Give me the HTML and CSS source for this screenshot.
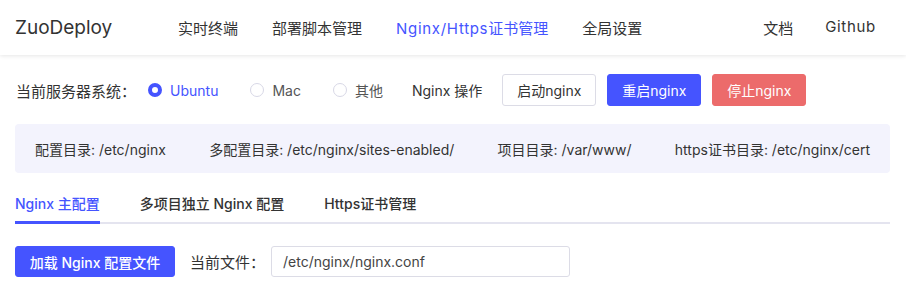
FILE: index.html
```html
<!DOCTYPE html>
<html lang="zh-CN">
<head>
    <meta charset="UTF-8">
    <meta name="viewport" content="width=device-width, initial-scale=1.0">
    <title>ZuoDeploy</title>
    <link rel="stylesheet" href="styles.css">
</head>
<body>
    <header class="header">
        <div class="logo">ZuoDeploy</div>
        <nav class="nav">
            <a href="#">实时终端</a>
            <a href="#">部署脚本管理</a>
            <a href="#" class="active"><span class="latin">Nginx/Https</span>证书管理</a>
            <a href="#">全局设置</a>
        </nav>
        <nav class="nav-right">
            <a href="#">文档</a>
            <a href="#" class="latin">Github</a>
        </nav>
    </header>

    <main class="main">
        <div class="system-row">
            <span class="label">当前服务器系统：</span>
            <label class="radio checked"><span class="dot"></span>Ubuntu</label>
            <label class="radio"><span class="dot"></span>Mac</label>
            <label class="radio"><span class="dot"></span>其他</label>
            <span class="ops-label">Nginx 操作</span>
            <button class="btn">启动nginx</button>
            <button class="btn btn-primary">重启nginx</button>
            <button class="btn btn-danger">停止nginx</button>
        </div>

        <div class="info-box">
            <span>配置目录: /etc/nginx</span>
            <span>多配置目录: /etc/nginx/sites-enabled/</span>
            <span>项目目录: /var/www/</span>
            <span>https证书目录: /etc/nginx/cert</span>
        </div>

        <div class="tabs">
            <div class="tab active">Nginx 主配置</div>
            <div class="tab">多项目独立 Nginx 配置</div>
            <div class="tab">Https证书管理</div>
        </div>

        <div class="file-row">
            <button class="btn btn-primary btn-load">加载 Nginx 配置文件</button>
            <span class="file-label">当前文件：</span>
            <input class="file-input" type="text" value="/etc/nginx/nginx.conf">
        </div>
    </main>
</body>
</html>
```

FILE: styles.css
```css
body {
    font-family: Inter, "Noto Sans CJK SC", sans-serif;
    color: #333;
    margin: 0;
    background: #fff;
}
a {
    text-decoration: none;
    color: #333;
}
.header {
    display: flex;
    align-items: center;
    height: 55px;
    padding: 0 30px 0 15px;
    box-shadow: 0 1px 4px rgba(0, 0, 0, 0.1);
}
.logo {
    font-size: 19px;
    color: #333;
    width: 163px;
}
.nav {
    display: flex;
    gap: 34px;
    flex: 1;
}
.nav a, .nav-right a {
    font-size: 15px;
}
.nav a.active {
    color: #4554ff;
}
.latin {
    letter-spacing: 0.7px;
}
.nav-right {
    display: flex;
    gap: 32px;
}
.main {
    padding: 19px 16px 0 15px;
}
.system-row {
    display: flex;
    align-items: center;
    height: 32px;
    font-size: 14px;
}
.label {
    margin-left: 1px;
    font-size: 15px;
    margin-right: 12px;
}
.radio {
    display: flex;
    align-items: center;
    gap: 8px;
    color: #555;
    margin-right: 32px;
}
.radio .dot {
    width: 14px;
    height: 14px;
    border: 1px solid #d8d8e6;
    border-radius: 50%;
    box-sizing: border-box;
}
.radio.checked {
    color: #4554ff;
}
.radio.checked .dot {
    border: 4px solid #4554ff;
    background: #fff;
}
.ops-label {
    margin-left: -3px;
    margin-right: 20px;
}
.btn {
    font-family: inherit;
    font-size: 14px;
    width: 94px;
    height: 32px;
    padding: 0;
    border: 1px solid #dcdce6;
    border-radius: 3px;
    background: #fff;
    color: #333;
    margin-right: 11px;
    white-space: nowrap;
}
.btn-primary {
    background: #4554ff;
    border-color: #4554ff;
    color: #fff;
}
.btn-danger {
    background: #ec6b6b;
    border-color: #ec6b6b;
    color: #fff;
}
.info-box {
    display: flex;
    justify-content: space-between;
    align-items: center;
    height: 49px;
    margin-top: 18px;
    padding: 0 20px;
    background: #f3f3fd;
    border-radius: 4px;
    font-size: 14px;
}
.tabs {
    display: flex;
    gap: 40px;
    margin-top: 14px;
    border-bottom: 2px solid #e4e4ef;
}
.tab {
    font-size: 14px;
    font-weight: 500;
    padding: 6px 0 8px;
    margin-bottom: -2px;
    border-bottom: 3px solid transparent;
}
.tab.active {
    color: #4554ff;
    border-bottom-color: #4554ff;
}
.file-row {
    display: flex;
    align-items: center;
    margin-top: 22px;
}
.btn-load {
    width: 160px;
    height: 31px;
    font-weight: 500;
    margin-right: 15px;
}
.file-label {
    font-size: 15px;
    margin-right: 6px;
}
.file-input {
    font-family: inherit;
    font-size: 14px;
    color: #444;
    width: 299px;
    height: 31px;
    box-sizing: border-box;
    padding: 0 11px;
    border: 1px solid #dcdce6;
    border-radius: 3px;
}
```
